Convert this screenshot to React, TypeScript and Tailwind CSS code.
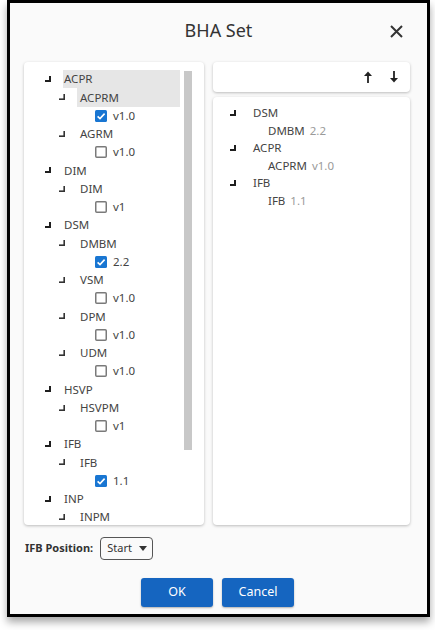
import React from 'react'

type Node = { label: string; level: 0 | 1 | 2; checked?: boolean; selected?: boolean }

const leftTree: Node[] = [
  { label: 'ACPR', level: 0, selected: true },
  { label: 'ACPRM', level: 1, selected: true },
  { label: 'v1.0', level: 2, checked: true },
  { label: 'AGRM', level: 1 },
  { label: 'v1.0', level: 2, checked: false },
  { label: 'DIM', level: 0 },
  { label: 'DIM', level: 1 },
  { label: 'v1', level: 2, checked: false },
  { label: 'DSM', level: 0 },
  { label: 'DMBM', level: 1 },
  { label: '2.2', level: 2, checked: true },
  { label: 'VSM', level: 1 },
  { label: 'v1.0', level: 2, checked: false },
  { label: 'DPM', level: 1 },
  { label: 'v1.0', level: 2, checked: false },
  { label: 'UDM', level: 1 },
  { label: 'v1.0', level: 2, checked: false },
  { label: 'HSVP', level: 0 },
  { label: 'HSVPM', level: 1 },
  { label: 'v1', level: 2, checked: false },
  { label: 'IFB', level: 0 },
  { label: 'IFB', level: 1 },
  { label: '1.1', level: 2, checked: true },
  { label: 'INP', level: 0 },
  { label: 'INPM', level: 1 },
]

const selectedTree = [
  { group: 'DSM', item: 'DMBM', version: '2.2' },
  { group: 'ACPR', item: 'ACPRM', version: 'v1.0' },
  { group: 'IFB', item: 'IFB', version: '1.1' },
]

function Elbow({ bold }: { bold?: boolean }) {
  const t = bold ? 2 : 1.6
  return (
    <svg width="7" height="6" viewBox="0 0 7 6" className="shrink-0">
      <rect x={6 - t} y="0" width={t} height="6" fill={bold ? '#1f1f1f' : '#333'} />
      <rect x="0" y={6 - t} width="6" height={t} fill={bold ? '#1f1f1f' : '#333'} />
    </svg>
  )
}

function Checkbox({ checked }: { checked?: boolean }) {
  return checked ? (
    <svg width="12" height="12" viewBox="0 0 12 12" className="shrink-0">
      <rect x="0" y="0" width="12" height="12" rx="1.5" fill="#1976d2" />
      <polyline points="2.6,6.3 5,8.6 9.6,3.6" fill="none" stroke="white" strokeWidth="1.6" />
    </svg>
  ) : (
    <svg width="12" height="12" viewBox="0 0 12 12" className="shrink-0">
      <rect x="0.75" y="0.75" width="10.5" height="10.5" rx="1" fill="white" stroke="#7a7a7a" strokeWidth="1.5" />
    </svg>
  )
}

function TreeRow({ node }: { node: Node }) {
  if (node.level === 2) {
    return (
      <div className="flex items-center h-[18.25px] pl-[71px]">
        <Checkbox checked={node.checked} />
        <span className="ml-[6px] text-[#444]">{node.label}</span>
      </div>
    )
  }
  const l0 = node.level === 0
  return (
    <div className={`flex items-center h-[18.25px] ${l0 ? 'pl-[21px]' : 'pl-[35px]'}`}>
      <div className="w-[18px] flex items-center">
        <Elbow bold={l0} />
      </div>
      <div
        className={`flex-1 h-full flex items-center ${l0 ? 'pl-[1px]' : 'pl-[3px]'} ${
          node.selected ? 'bg-[#e6e6e6]' : ''
        }`}
      >
        <span className="text-[#444]">{node.label}</span>
      </div>
    </div>
  )
}

function ArrowUp() {
  return (
    <svg width="10" height="12" viewBox="0 0 10 12">
      <path d="M5 3.5V12" stroke="#222" strokeWidth="1.8" />
      <polygon points="1,5 5,0.5 9,5" fill="#222" />
    </svg>
  )
}

function ArrowDown() {
  return (
    <svg width="10" height="12" viewBox="0 0 10 12">
      <path d="M5 0V8.5" stroke="#222" strokeWidth="1.8" />
      <polygon points="1,7 5,11.5 9,7" fill="#222" />
    </svg>
  )
}

export default function App() {
  return (
    <div className="w-[435px] h-[630px] bg-white overflow-hidden" style={{ fontFamily: '"Noto Sans", "Open Sans", sans-serif' }}>
      <div className="ml-[7px] w-[423px] h-[617px] border-[3px] border-black bg-[#fafafa] shadow-[0_5px_8px_rgba(0,0,0,0.35)] flex flex-col">
        {/* Header */}
        <div className="h-[59px] relative flex items-center justify-center">
          <span className="text-[18px] text-[#333] -mt-[5px]">BHA Set</span>
          <button className="absolute right-[23px] top-[20px] w-[16px] h-[16px] flex items-center justify-center">
            <svg width="13" height="13" viewBox="0 0 13 13">
              <path d="M1 1L12 12M12 1L1 12" stroke="#333" strokeWidth="2" />
            </svg>
          </button>
        </div>

        {/* Panels */}
        <div className="flex pl-[14px] pr-[17px] gap-[9px] h-[463px]">
          {/* Available tree */}
          <div className="w-[180px] h-full bg-white rounded-[4px] shadow-[0_1px_3px_rgba(0,0,0,0.25)] flex overflow-hidden">
            <div className="flex-1 pt-[8px] text-[11.5px] leading-none overflow-hidden">
              {leftTree.map((n, i) => (
                <TreeRow key={i} node={n} />
              ))}
            </div>
            <div className="w-[8px] ml-[4px] mr-[12px] pt-[9px]">
              <div className="h-[379px] bg-[#c8c8c8]" />
            </div>
          </div>

          {/* Selected */}
          <div className="flex-1 flex flex-col gap-[5px]">
            <div className="h-[30px] bg-white rounded-[4px] shadow-[0_1px_3px_rgba(0,0,0,0.25)] flex items-center justify-end gap-[16px] pr-[11px]">
              <ArrowUp />
              <ArrowDown />
            </div>
            <div className="flex-1 bg-white rounded-[4px] shadow-[0_1px_3px_rgba(0,0,0,0.25)] pt-[7px] text-[11.5px] leading-none">
              {selectedTree.map((g) => (
                <div key={g.group}>
                  <div className="flex items-center h-[17.6px] pl-[17px]">
                    <div className="w-[23px] flex items-center">
                      <Elbow bold />
                    </div>
                    <span className="text-[#444]">{g.group}</span>
                  </div>
                  <div className="flex items-center h-[17.6px] pl-[55px]">
                    <span className="text-[#444]">{g.item}</span>
                    <span className="ml-[5px] text-[#9a9a9a]">{g.version}</span>
                  </div>
                </div>
              ))}
            </div>
          </div>
        </div>

        {/* IFB position */}
        <div className="flex items-center pl-[15px] mt-[12px] h-[23px]">
          <span className="text-[11px] font-bold text-[#333]">IFB Position:</span>
          <div className="ml-[7px] w-[53px] h-[23px] border border-[#555] rounded-[4px] flex items-center pl-[6px] pr-[5px] justify-between text-[11px] text-[#333]">
            <span>Start</span>
            <svg width="8" height="5" viewBox="0 0 8 5">
              <polygon points="0,0 8,0 4,5" fill="#333" />
            </svg>
          </div>
        </div>

        {/* Buttons */}
        <div className="flex justify-center gap-[9px] mt-[18px] pr-[2px]">
          <button className="w-[72px] h-[29px] bg-[#1565c0] text-white text-[12.5px] rounded-[3px] shadow-[0_1px_2px_rgba(0,0,0,0.3)]">OK</button>
          <button className="w-[72px] h-[29px] bg-[#1565c0] text-white text-[12.5px] rounded-[3px] shadow-[0_1px_2px_rgba(0,0,0,0.3)]">Cancel</button>
        </div>
      </div>
    </div>
  )
}
